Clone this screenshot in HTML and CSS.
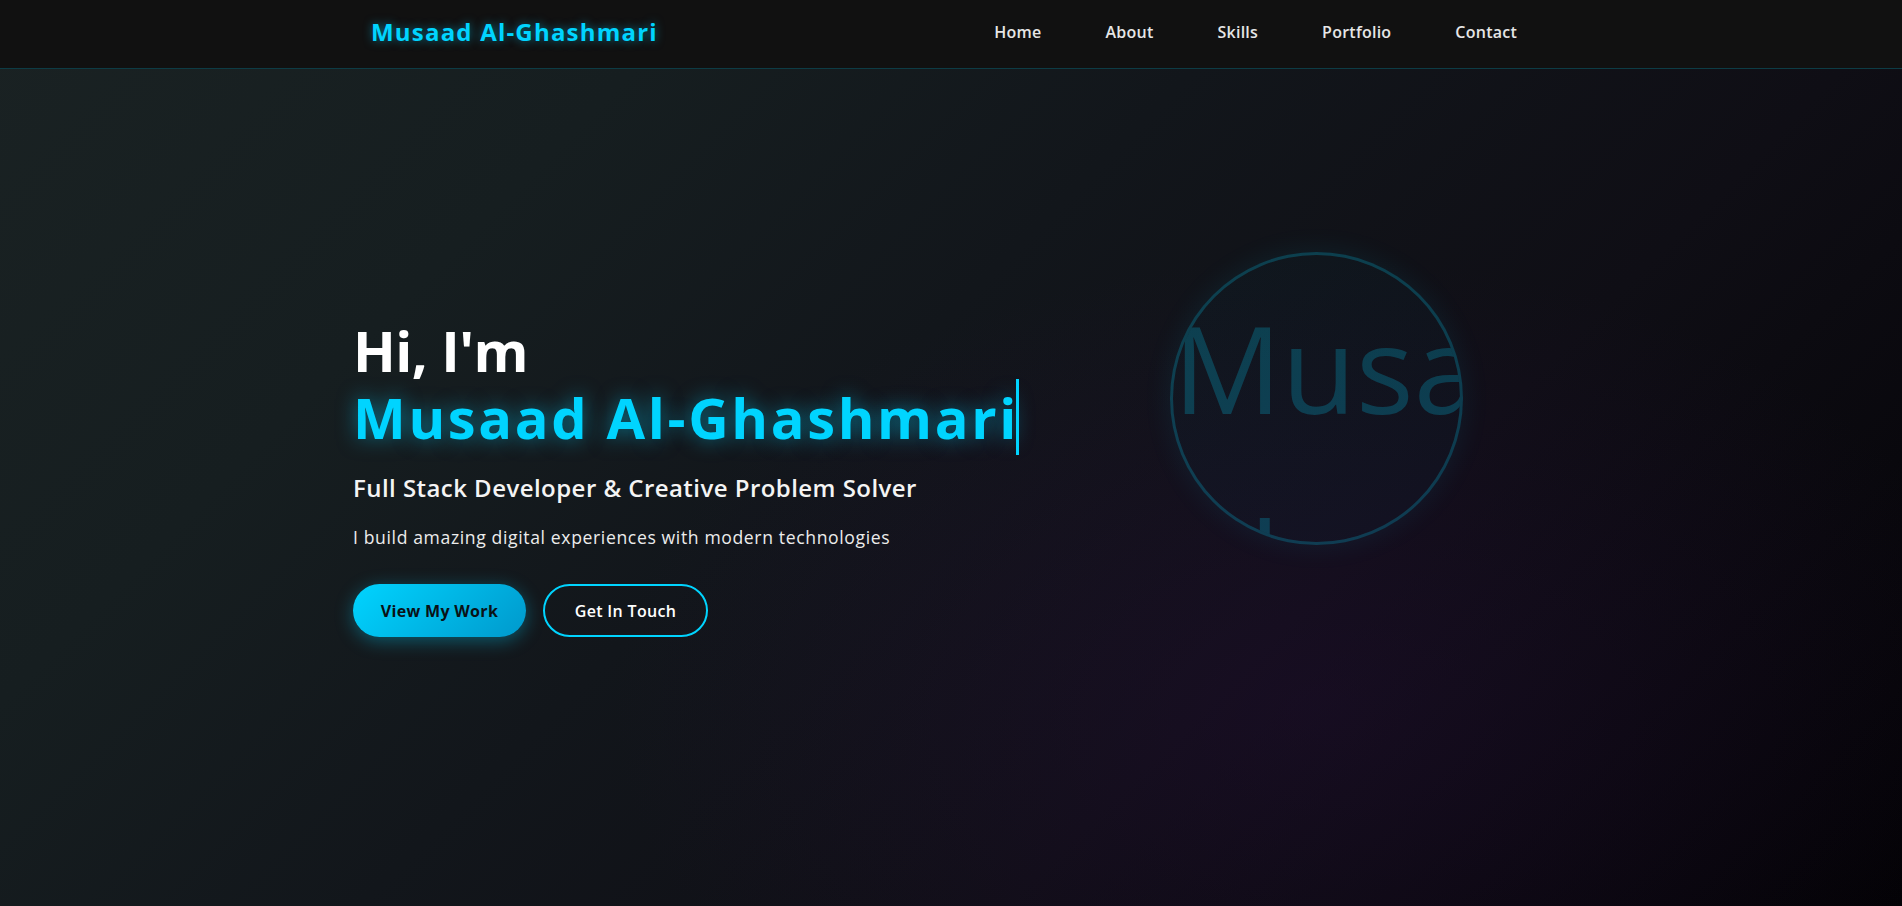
FILE: index.html
```html
<!DOCTYPE html>
<html lang="en">
<head>
<meta charset="utf-8">
<title>Musaad Al-Ghashmari</title>
<link rel="stylesheet" href="styles.css">
</head>
<body>
<header class="site-header">
  <div class="header-inner">
    <a class="logo" href="#">Musaad Al-Ghashmari</a>
    <nav class="nav">
      <a href="#">Home</a>
      <a href="#">About</a>
      <a href="#">Skills</a>
      <a href="#">Portfolio</a>
      <a href="#">Contact</a>
    </nav>
  </div>
</header>
<main class="hero">
  <div class="hero-inner">
    <div class="hero-text">
      <h1 class="hero-title"><span class="hi">Hi, I'm</span><br><span class="name"><span class="name-text">Musaad Al-Ghashmari</span></span></h1>
      <p class="subtitle">Full Stack Developer &amp; Creative Problem Solver</p>
      <p class="desc">I build amazing digital experiences with modern technologies</p>
      <div class="buttons">
        <a class="btn btn-primary" href="#">View My Work</a>
        <a class="btn btn-outline" href="#">Get In Touch</a>
      </div>
    </div>
    <div class="hero-visual">
      <div class="avatar"><span class="avatar-alt">Musaad Al-Ghashmari</span></div>
    </div>
  </div>
</main>
</body>
</html>
```
FILE: styles.css
```css
* { box-sizing: border-box; }
html, body { margin: 0; padding: 0; }
body {
  height: 906px;
  overflow: hidden;
  font-family: "Open Sans", "Noto Sans", sans-serif;
  color: #fff;
  background:
    radial-gradient(ellipse 700px 450px at 69% 78%, rgba(40, 14, 60, 0.35), rgba(40, 14, 60, 0) 100%),
    linear-gradient(135deg, #1a2223 0%, #161e20 25%, #12161b 45%, #0f0e15 68%, #030205 100%);
}
a { text-decoration: none; color: inherit; }

.site-header {
  height: 69px;
  background: #111111;
  border-bottom: 1px solid rgba(0, 212, 255, 0.22);
}
.header-inner {
  max-width: 1200px;
  height: 68px;
  margin: 0 auto;
  padding: 0 20px 6px;
  display: flex;
  align-items: center;
  justify-content: space-between;
}
.logo {
  font-size: 24px;
  font-weight: 700;
  letter-spacing: 0.05em;
  color: #00d4ff;
  text-shadow: 0 0 10px rgba(0, 212, 255, 0.5);
}
.nav { display: flex; gap: 32px; margin-top: 2px; }
.nav a {
  padding: 0 16px;
  font-size: 16px;
  font-weight: 600;
  letter-spacing: 0.015em;
  color: #e6e6e6;
}
.nav a:last-child { padding-right: 14px; }

.hero { height: 837px; }
.hero-inner {
  max-width: 1196px;
  height: 100%;
  margin: 0 auto;
  display: flex;
  align-items: center;
}
.hero-text { margin-bottom: 21px; }
.hero-title {
  margin: 0;
  font-size: 56px;
  line-height: 67px;
  font-weight: 700;
}
.hi { letter-spacing: -0.01em; }
.name {
  color: #00d4ff;
  letter-spacing: 0.047em;
  text-shadow: 0 0 20px rgba(0, 212, 255, 0.5);
  border-right: 3px solid #00d4ff;
}
.name-text { margin-right: -0.047em; }
.subtitle {
  margin: 18px 0 0;
  font-size: 24px;
  line-height: 38px;
  font-weight: 600;
  letter-spacing: 0.45px;
  color: #f4f4f4;
}
.desc {
  margin: 16px 0 0;
  font-size: 17.6px;
  line-height: 28px;
  letter-spacing: 0.62px;
  color: #ececec;
}
.buttons {
  margin-top: 33px;
  display: flex;
  gap: 17px;
}
.btn {
  height: 53px;
  display: inline-flex;
  align-items: center;
  justify-content: center;
  border-radius: 30px;
  font-size: 16px;
  font-weight: 600;
  letter-spacing: 0.02em;
}
.btn-primary {
  width: 173px;
  color: #0a1216;
  font-weight: 700;
  background: linear-gradient(135deg, #00d4ff 0%, #0099cc 100%);
  box-shadow: 0 4px 18px rgba(0, 212, 255, 0.35);
}
.btn-outline {
  width: 165px;
  color: #fff;
  border: 2px solid #00d4ff;
}

.hero-visual {
  margin-left: auto;
  margin-right: 86px;
  transform: translateY(-89px);
}
.avatar {
  width: 293px;
  height: 293px;
  border-radius: 50%;
  overflow: hidden;
  border: 3px solid rgba(0, 212, 255, 0.22);
  background: rgba(0, 212, 255, 0.025);
  box-shadow: 0 0 30px rgba(0, 212, 255, 0.08);
}
.avatar-alt {
  display: block;
  font-family: "Open Sans", sans-serif;
  font-size: 121px;
  line-height: 196px;
  margin-top: 14px;
  color: rgba(0, 212, 255, 0.22);
  width: 600px;
}
```
